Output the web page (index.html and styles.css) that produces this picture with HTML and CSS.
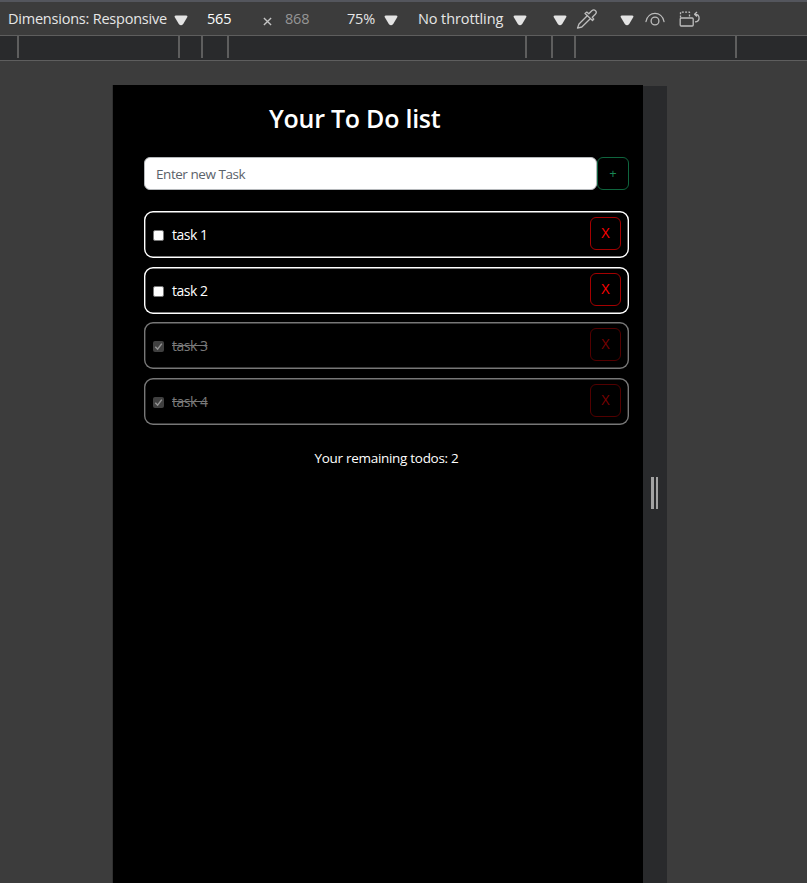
FILE: index.html
```html
<!DOCTYPE html>
<html lang="en">
<head>
<meta charset="utf-8">
<title>Your To Do list</title>
<link rel="stylesheet" href="styles.css">
</head>
<body>
<header class="toolbar">
  <span class="label dims">Dimensions: Responsive</span>
  <svg class="caret c1" viewBox="0 0 14 11"><path d="M2 .5h10q2 0 1.200 1.800L9.200 9q-2.200 2.500-4.400 0L.8 2.300Q0 .5 2 .5z"/></svg>
  <span class="label width">565</span>
  <svg class="times" viewBox="0 0 10 10"><path d="M1 1l8 8M9 1L1 9"/></svg>
  <span class="label height">868</span>
  <span class="label zoom">75%</span>
  <svg class="caret c2" viewBox="0 0 14 11"><path d="M2 .5h10q2 0 1.200 1.800L9.200 9q-2.200 2.500-4.400 0L.8 2.300Q0 .5 2 .5z"/></svg>
  <span class="label throttle">No throttling</span>
  <svg class="caret c3" viewBox="0 0 14 11"><path d="M2 .5h10q2 0 1.200 1.800L9.200 9q-2.200 2.500-4.400 0L.8 2.300Q0 .5 2 .5z"/></svg>
  <svg class="caret c4" viewBox="0 0 14 11"><path d="M2 .5h10q2 0 1.200 1.800L9.200 9q-2.200 2.500-4.400 0L.8 2.300Q0 .5 2 .5z"/></svg>
  <svg class="icon dropper" viewBox="0 0 22 22"><path d="M11.500 7.500L3 16l-1.500 4.200L5.800 19l8.700-8.500M9 5.500l7.500 7 1.300-1.400-1.500-1.800 3-3c2.500-2.500-.8-6-3.500-3.500l-3 3-2-1.700z"/></svg>
  <svg class="caret c5" viewBox="0 0 14 11"><path d="M2 .5h10q2 0 1.200 1.800L9.200 9q-2.200 2.500-4.400 0L.8 2.300Q0 .5 2 .5z"/></svg>
  <svg class="icon eye" viewBox="0 0 20 14"><path d="M1 9.500C3 -1.300 17 -1.300 19 9.500"/><circle cx="10" cy="9" r="3.900"/></svg>
  <svg class="icon rotate" viewBox="0 0 22 16"><rect x="1.200" y="7" width="13" height="8" rx="1"/><path stroke-dasharray="2 1.300" d="M1.500 6.500v-5.300h9v5.300"/><path d="M16 10.800c5.600-.2 5.200-7.500.2-7.500M18 1l-2.400 2.200L18 5.500"/></svg>
</header>
<div class="ruler"><i></i><i></i><i></i><i></i><i></i><i></i><i></i><i></i></div>
<main class="stage">
  <section class="page">
    <h1>Your To Do list</h1>
    <form class="entry">
      <div class="field">Enter new Task</div>
      <button class="add" type="button">+</button>
    </form>
    <ul class="tasks">
      <li><span class="check"></span><span class="name">task 1</span><button class="remove" type="button">X</button></li>
      <li><span class="check"></span><span class="name">task 2</span><button class="remove" type="button">X</button></li>
      <li class="done"><span class="check"><svg viewBox="0 0 11 11"><path d="M2.300 5.800l2.300 2.400 4.200-5.600"/></svg></span><span class="name">task 3</span><button class="remove" type="button">X</button></li>
      <li class="done"><span class="check"><svg viewBox="0 0 11 11"><path d="M2.300 5.800l2.300 2.400 4.200-5.600"/></svg></span><span class="name">task 4</span><button class="remove" type="button">X</button></li>
    </ul>
    <p class="remaining"><span>Your remaining todos: 2</span></p>
  </section>
  <aside class="resizer"><i></i><i></i></aside>
</main>
</body>
</html>
```
FILE: styles.css
```css
* { box-sizing: border-box; }
body {
  margin: 0;
  width: 807px;
  height: 883px;
  overflow: hidden;
  background: #3c3c3c;
  color: #fff;
  font: 14px/20px "Open Sans", "Noto Sans", sans-serif;
}
.toolbar {
  display: flex;
  align-items: flex-start;
  height: 36px;
  border-top: 2px solid #54565d;
  border-bottom: 1px solid #5e5e5e;
}
.toolbar > * { flex: none; }
.label { margin-top: 7px; color: #e6e6e6; white-space: nowrap; font-size: 14.500px; letter-spacing: -.22px; }
.dims { width: 166px; padding-left: 8px; }
.caret { width: 14px; height: 11px; margin-top: 13px; fill: #e3e3e3; }
.c1 { margin-left: 7.500px; }
.width { width: 56px; margin-left: 19.500px; color: #fff; }
.times { width: 9px; height: 9px; margin-top: 15px; fill: none; stroke: #c4c4c4; stroke-width: 1.5; }
.height { width: 62px; margin-left: 13px; color: #959595; }
.zoom { width: 36.500px; }
.throttle { width: 95px; margin-left: 20.500px; letter-spacing: -.1px; }
.c3 { margin-left: -.5px; }
.c4 { margin-left: 26px; }
.icon { fill: none; stroke: #bdbdbd; stroke-width: 1.300; stroke-linejoin: round; stroke-linecap: round; }
.dropper { width: 22px; height: 22px; margin: 6px 0 0 9px; }
.c5 { margin-left: 22px; }
.eye { width: 20px; height: 14px; margin: 10px 0 0 11px; }
.rotate { width: 22px; height: 16px; margin: 9px 0 0 14px; stroke-linecap: butt; }
.ruler {
  display: grid;
  grid-template-columns: 161px 23px 26px 298px 26px 23px 161px 2px;
  height: 25px;
  padding-left: 17px;
  background: #292a2c;
  border-bottom: 1px solid #5e5e5e;
}
.ruler i { width: 2px; height: 22px; background: #5e5e5e; }
.stage { display: flex; height: 822px; padding: 24px 0 0 113px; }
.page { width: 530px; background: #000; padding: 0 14px 0 31px; box-shadow: -1px 0 #303030; }
h1 {
  margin: 17px 0 0;
  padding-left: 125px;
  font-size: 25px;
  line-height: 32px;
  font-weight: 600;
  letter-spacing: -.25px;
  white-space: nowrap;
}
.entry { display: flex; margin: 23px 0 0; height: 33px; }
.field {
  width: 453px;
  padding: 7px 11px;
  background: #fff;
  border: 1px solid #b5b8bb;
  border-radius: 6px;
  color: #5b626a;
  font-size: 13.500px;
  letter-spacing: -.45px;
  line-height: 19px;
}
button {
  padding: 0;
  background: none;
  border-radius: 6px;
  font: 14.500px/1 "Open Sans", "Noto Sans", sans-serif;
}
.add { width: 32px; border: 1px solid #0f653e; color: #198754; font-size: 13px; }
.tasks { display: grid; gap: 8.600px; list-style: none; margin: 21px 0 0; padding: 0; }
.tasks li {
  display: flex;
  align-items: center;
  height: 47px;
  padding: 0 8px 0 9px;
  border-radius: 9px;
  box-shadow: inset 0 0 0 1.400px #fff;
}
.check { width: 11px; height: 11px; margin-top: 2px; background: #fff; border: 1px solid #777; border-radius: 2px; }
.name { margin: 1px 0 0 8px; font-size: 14px; letter-spacing: -.5px; }
.remove { width: 31px; height: 33px; margin: -2px 0 0 auto; border: 1px solid #a40000; color: #f00; }
.tasks .done { box-shadow: inset 0 0 0 1.400px #777; }
.done .check { background: #404040; border: 0; }
.check svg { display: block; width: 11px; height: 11px; fill: none; stroke: #929292; stroke-width: 1.500; }
.done .name { color: #7a7a7a; text-decoration: line-through; }
.done .remove { border-color: #520000; color: #780000; }
.remaining { margin: 23px 0 0; text-align: center; font-size: 13.500px; letter-spacing: -.3px; }
.resizer {
  display: flex;
  gap: 2px;
  width: 24px;
  margin-top: 1px;
  padding: 391px 0 0 8px;
  background: #292a2c;
}
.resizer i { width: 2.500px; height: 32px; background: #a3a3a3; }
```
